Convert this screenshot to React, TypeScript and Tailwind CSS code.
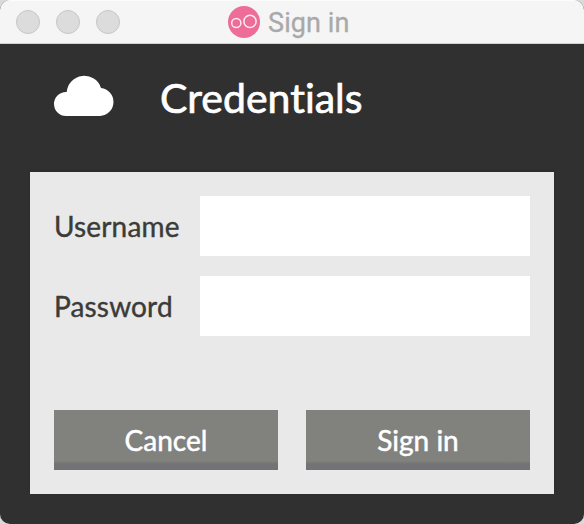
const TitleBar = () => (
  <header className="flex h-11 shrink-0 items-center border-b border-[#cfd1d1] bg-[#f5f5f5] shadow-[inset_0_1px_0_#fcfcfc]">
    <div className="flex w-[228px] gap-4 pl-4">
      <span className="size-6 rounded-full border border-[#c6c6c6] bg-[#dcdcdc]" />
      <span className="size-6 rounded-full border border-[#c6c6c6] bg-[#dcdcdc]" />
      <span className="size-6 rounded-full border border-[#c6c6c6] bg-[#dcdcdc]" />
    </div>
    <svg className="size-8" viewBox="0 0 32 32">
      <circle cx="16" cy="16" r="16" fill="#ed6c98" />
      <g fill="none" stroke="#fdedf2" strokeWidth="1.5">
        <circle cx="8.3" cy="17" r="4.6" />
        <circle cx="22" cy="15.4" r="6.1" />
      </g>
    </svg>
    <h1 className="ml-2 mt-0.5 whitespace-nowrap font-[Roboto,sans-serif] text-[27px] leading-8 tracking-[0.1px] text-[#a9a9a9] [-webkit-text-stroke:0.3px_#a9a9a9]">Sign in</h1>
  </header>
);

const Field = ({ label, type }: { label: string; type: string }) => (
  <label className="flex h-[60px] items-center">
    <span className="w-[146px] text-[28px] leading-9 tracking-[0.15px] text-[#3b3b38] [-webkit-text-stroke:0.4px_#3b3b38]">{label}</span>
    <input type={type} className="h-[60px] w-[330px] bg-white px-3 text-[28px] outline-none" />
  </label>
);

const Button = ({ children }: { children: string }) => (
  <button className="h-[60px] w-56 bg-[linear-gradient(to_bottom,#81817e_0px,#81817e_51px,#737375_54px,#737375_60px)] text-[28px] leading-9 text-white [-webkit-text-stroke:0.5px_white]">
    {children}
  </button>
);

export default function App() {
  return (
    <div className="h-[524px] w-[584px] bg-[#dadada] font-[Lato,sans-serif] [font-variant-ligatures:none]">
      <div className="flex h-full flex-col overflow-hidden rounded-[10px] bg-[#303030]">
        <TitleBar />
        <div className="flex h-32 shrink-0 items-start">
          <svg className="ml-[54px] mt-[31px] h-[42px] w-[60px]" viewBox="0 0 60 42" fill="white">
            <path d="M12 41 A12 12 0 0 1 12 17 Q12.4 17 12.7 17 A17.6 17.6 0 0 1 47 13 A14.05 14.05 0 0 1 46 41 Z" />
          </svg>
          <h2 className="ml-[46px] mt-[29px] text-[41px] leading-[50px] text-white [-webkit-text-stroke:0.7px_white]">Credentials</h2>
        </div>
        <form className="mx-[30px] h-[322px] bg-[#e9e9e9] p-6 shadow-[0_-2px_2px_#2c2c2c]" onSubmit={(e) => e.preventDefault()}>
          <div className="flex flex-col gap-5">
            <Field label="Username" type="text" />
            <Field label="Password" type="password" />
          </div>
          <div className="mt-[74px] flex justify-between">
            <Button>Cancel</Button>
            <Button>Sign in</Button>
          </div>
        </form>
      </div>
    </div>
  );
}
